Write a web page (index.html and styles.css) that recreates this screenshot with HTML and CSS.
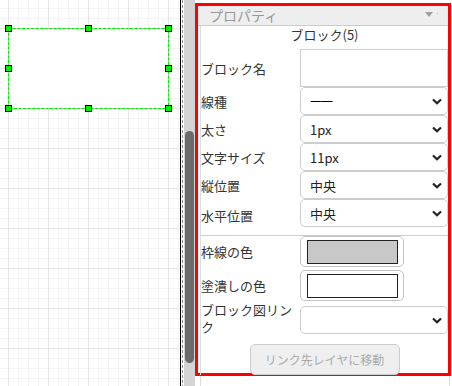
FILE: index.html
```html
<!DOCTYPE html>
<html lang="ja">
<head>
<meta charset="utf-8">
<title>プロパティ</title>
<link rel="stylesheet" href="styles.css">
</head>
<body>
<div class="app">
  <div class="canvas">
    <svg class="selection" width="180" height="386" viewBox="0 0 180 386" xmlns="http://www.w3.org/2000/svg">
      <rect x="8.5" y="28.5" width="160" height="80" fill="#ffffff" stroke="#c8c8c8" stroke-width="1"/>
      <rect x="8.5" y="28.5" width="160" height="80" fill="none" stroke="#00ee00" stroke-width="1" stroke-dasharray="3 1.5"/>
      <g fill="#00ee00" stroke="#000" stroke-width="1">
        <rect x="5.5" y="25.5" width="6" height="6"/>
        <rect x="85.5" y="25.5" width="6" height="6"/>
        <rect x="165.5" y="25.5" width="6" height="6"/>
        <rect x="5.5" y="65.5" width="6" height="6"/>
        <rect x="165.5" y="65.5" width="6" height="6"/>
        <rect x="5.5" y="105.5" width="6" height="6"/>
        <rect x="85.5" y="105.5" width="6" height="6"/>
        <rect x="165.5" y="105.5" width="6" height="6"/>
      </g>
    </svg>
  </div>
  <div class="splitter"></div>
  <div class="scroll"><div class="thumb"></div></div>
  <div class="panel">
    <div class="props">
      <div class="props-head">
        <span class="props-title">プロパティ</span>
        <span class="props-toggle"></span>
        <span class="props-dot"></span>
      </div>
      <div class="props-body">
        <div class="props-name">ブロック(5)</div>
        <div class="form">
          <div class="label">ブロック名</div>
          <div class="text-input"></div>

          <div class="label">線種</div>
          <div class="select"><span class="select-value select-line">——</span><svg class="chev" width="10" height="7" viewBox="0 0 10 7"><polyline points="1,1.5 5,5.3 9,1.5" fill="none" stroke="#222" stroke-width="2.2"/></svg></div>

          <div class="label">太さ</div>
          <div class="select"><span class="select-value">1px</span><svg class="chev" width="10" height="7" viewBox="0 0 10 7"><polyline points="1,1.5 5,5.3 9,1.5" fill="none" stroke="#222" stroke-width="2.2"/></svg></div>

          <div class="label">文字サイズ</div>
          <div class="select"><span class="select-value">11px</span><svg class="chev" width="10" height="7" viewBox="0 0 10 7"><polyline points="1,1.5 5,5.3 9,1.5" fill="none" stroke="#222" stroke-width="2.2"/></svg></div>

          <div class="label">縦位置</div>
          <div class="select"><span class="select-value">中央</span><svg class="chev" width="10" height="7" viewBox="0 0 10 7"><polyline points="1,1.5 5,5.3 9,1.5" fill="none" stroke="#222" stroke-width="2.2"/></svg></div>

          <div class="label label-low">水平位置</div>
          <div class="select"><span class="select-value">中央</span><svg class="chev" width="10" height="7" viewBox="0 0 10 7"><polyline points="1,1.5 5,5.3 9,1.5" fill="none" stroke="#222" stroke-width="2.2"/></svg></div>

          <div class="sep"></div>

          <div class="label">枠線の色</div>
          <div class="color-box"><span class="swatch swatch-gray"></span></div>

          <div class="label label-gap">塗潰しの色</div>
          <div class="color-box color-gap"><span class="swatch swatch-white"></span></div>

          <div class="label label-wrap">ブロック図リンク</div>
          <div class="select select-gap"><span class="select-value"></span><svg class="chev" width="10" height="7" viewBox="0 0 10 7"><polyline points="1,1.5 5,5.3 9,1.5" fill="none" stroke="#222" stroke-width="2.2"/></svg></div>
        </div>
        <div class="actions">
          <div class="btn">リンク先レイヤに移動</div>
        </div>
      </div>
    </div>
    <div class="panel-rest"></div>
  </div>
</div>
</body>
</html>
```

FILE: styles.css
```css
* { box-sizing: border-box; }

html, body {
  margin: 0;
  padding: 0;
  background: #ffffff;
}

body {
  font-family: "Noto Sans CJK JP", "Noto Sans", sans-serif;
  color: #333333;
  width: 452px;
  height: 386px;
  overflow: hidden;
}

.app {
  display: flex;
  height: 386px;
}

/* canvas */
.canvas {
  position: relative;
  width: 181px;
  height: 386px;
  border-right: 1px solid #000000;
  background:
    linear-gradient(to right, #e6e6e6 1px, transparent 1px) 8px 28px / 40px 40px,
    linear-gradient(to bottom, #e6e6e6 1px, transparent 1px) 8px 28px / 40px 40px,
    linear-gradient(to right, #f4f4f4 1px, transparent 1px) 8px 8px / 10px 10px,
    linear-gradient(to bottom, #f4f4f4 1px, transparent 1px) 8px 8px / 10px 10px,
    #ffffff;
}

.selection {
  position: absolute;
  left: 0;
  top: 0;
  display: block;
}

.splitter {
  width: 3px;
  height: 386px;
  background: repeating-linear-gradient(to bottom, #8a8a8a 0 3px, transparent 3px 5px) no-repeat 1px 0 / 1px 100%, #ffffff;
}

.scroll {
  width: 11px;
  height: 386px;
  background: #d4d4d4;
  padding-top: 131px;
  padding-left: 1px;
}

.thumb {
  width: 9px;
  height: 232px;
  background: #6b6b6b;
  border-radius: 5px;
}

/* panel */
.panel {
  width: 257px;
  height: 386px;
  padding-top: 3px;
  display: flex;
  flex-direction: column;
}

.props {
  width: 256px;
  height: 373px;
  border: 3px solid #ff0000;
  display: flex;
  flex-direction: column;
}

.props-head {
  height: 20px;
  background: #eeeeee;
  border-bottom: 1px solid #cccccc;
  display: flex;
  align-items: center;
  padding-left: 11px;
}

.props-title {
  font-size: 14px;
  line-height: 19px;
  color: #999999;
  flex: 1;
}

.props-toggle {
  width: 0;
  height: 0;
  border-left: 4px solid transparent;
  border-right: 4px solid transparent;
  border-top: 5px solid #a0a0a0;
  margin-right: 4px;
  margin-top: -3px;
}

.props-dot {
  width: 1px;
  height: 1px;
  background: #b0b0b0;
  margin-right: 10px;
  margin-top: -5px;
}

.props-body {
  flex: 1;
  margin-left: 2px;
  border-left: 1px solid #dddddd;
  display: flex;
  flex-direction: column;
}

.props-name {
  text-align: center;
  font-size: 13px;
  line-height: 18px;
  height: 18px;
  margin-bottom: 5px;
  color: #333333;
}

.form {
  display: grid;
  grid-template-columns: 99px 148px;
  align-items: center;
}

.label {
  font-size: 13px;
  line-height: 17px;
  color: #333333;
  white-space: nowrap;
}

.label-low {
  position: relative;
  top: 2px;
}

.label-wrap {
  white-space: normal;
}

.label-gap {
  margin-top: 3px;
}

.text-input {
  height: 38px;
  border: 1px solid #cccccc;
  background: #ffffff;
}

.select {
  position: relative;
  height: 28px;
  border: 1px solid #cccccc;
  border-radius: 5px;
  background: #ffffff;
  display: flex;
  align-items: center;
  padding-left: 9px;
  font-size: 13px;
  color: #222222;
}

.select-value {
  flex: 1;
  line-height: 17px;
}

.select-line {
  font-family: "DejaVu Sans", sans-serif;
  font-size: 12px;
  color: #000000;
  letter-spacing: -1px;
}

.chev {
  position: absolute;
  right: 5px;
  top: 50%;
  margin-top: -3px;
}

.select-gap {
  margin-top: 3px;
}

.sep {
  grid-column: 1 / -1;
  height: 1px;
  background: #cccccc;
  margin-top: 8px;
}

.color-box {
  width: 104px;
  height: 31px;
  border: 1px solid #c4c4c4;
  border-radius: 5px;
  background: #ffffff;
  display: flex;
  align-items: center;
  justify-content: center;
}

.color-gap {
  margin-top: 3px;
}

.swatch {
  width: 91px;
  height: 24px;
  border: 1px solid #222222;
}

.swatch-gray { background: #c8c8c8; }
.swatch-white { background: #ffffff; }

.actions {
  display: flex;
  justify-content: center;
  margin-top: 9px;
}

.btn {
  width: 150px;
  height: 31px;
  border: 1px solid #cccccc;
  border-radius: 5px;
  background: #efefef;
  color: #aaaaaa;
  font-size: 12px;
  display: flex;
  align-items: center;
  justify-content: center;
}

.panel-rest {
  flex: 1;
  margin-left: 5px;
  margin-right: 2px;
  border-left: 1px solid #dddddd;
  border-right: 1px solid #dddddd;
}
```
